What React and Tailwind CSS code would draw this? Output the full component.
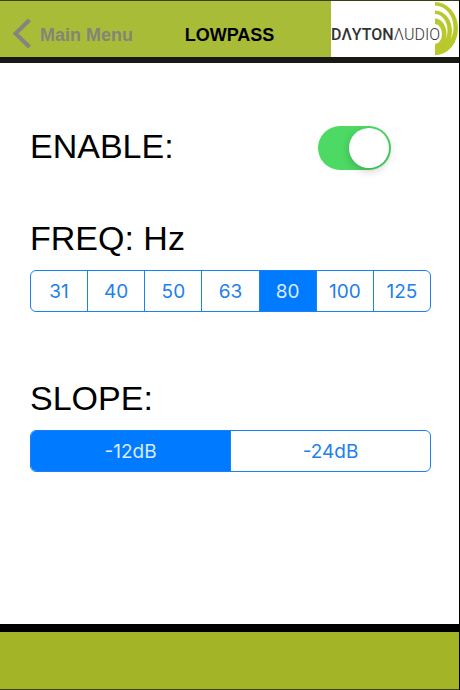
import React, { useState } from 'react';

const FREQUENCIES = ['31', '40', '50', '63', '80', '100', '125'];
const SLOPES = ['-12dB', '-24dB'];

const Logo = () => (
  <div
    role="img"
    aria-label="Dayton Audio"
    className="relative flex h-full w-32 items-center justify-self-end bg-white pt-3"
  >
    {/* Sound waves */}
    <svg className="absolute right-0 top-0 h-14 w-6" viewBox="0 0 24 56" aria-hidden="true">
      <ellipse cx="0" cy="27.5" rx="23" ry="26.5" fill="#b9c92b" />
      <ellipse cx="0" cy="26.5" rx="18.5" ry="22" fill="#fff" />
      <ellipse cx="0" cy="30" rx="17" ry="20.5" fill="#b9c92b" />
      <ellipse cx="0" cy="29.5" rx="12.5" ry="16.5" fill="#fff" />
      <ellipse cx="0" cy="33" rx="11.5" ry="15.5" fill="#b9c92b" />
      <ellipse cx="0" cy="33" rx="7" ry="10" fill="#fff" />
      <path d="M0 43 Q10 44 17 36 L20 41 Q12 54 0 54 Z" fill="#b9c92b" />
    </svg>
    <span className="relative whitespace-nowrap font-['Roboto',sans-serif] text-base leading-5 text-[#333]">
      <span className="font-medium">DΛYTON</span>
      <span className="font-light">ΛUDIO</span>
    </span>
  </div>
);

const SegmentedControl = ({ name, labelledBy, options, value, onChange }) => (
  <div
    role="radiogroup"
    aria-labelledby={labelledBy}
    className="flex h-[42px] overflow-hidden rounded-md border border-[#1a80f5] divide-x divide-[#1a80f5]"
  >
    {options.map((option) => (
      <label key={option} className="relative flex flex-1 cursor-pointer">
        <input
          type="radio"
          name={name}
          value={option}
          checked={value === option}
          onChange={() => onChange(option)}
          className="peer sr-only"
        />
        <span className="flex flex-1 items-center justify-center pt-0.5 font-['Inter',sans-serif] text-[19px] leading-6 text-[#2080ee] peer-checked:bg-[#007aff] peer-checked:text-[#d8ebff]">
          {option}
        </span>
      </label>
    ))}
  </div>
);

const App = () => {
  const [enabled, setEnabled] = useState(true);
  const [freq, setFreq] = useState('80');
  const [slope, setSlope] = useState('-12dB');

  return (
    <div className="flex min-h-screen flex-col border-r border-black bg-white font-['Liberation_Sans',sans-serif] text-black">
      <header className="grid h-[63px] grid-cols-[1fr_auto_1fr] items-center border-t border-b-[6px] border-t-[#3b4212] border-b-[#191a16] bg-[#a9bc37]">
        <a href="#menu" className="flex items-center gap-2 pl-3 pt-3 text-[#848577]">
          <svg className="mb-1 h-8 w-5" viewBox="0 0 20 32" fill="none" aria-hidden="true">
            <path d="M17.5 3 L3.5 16.5 L17.5 30" stroke="#848480" strokeWidth="4" />
          </svg>
          <span className="text-lg leading-6 font-bold">Main Menu</span>
        </a>
        <h1 className="pt-3 text-lg leading-6 font-bold">LOWPASS</h1>
        <Logo />
      </header>

      <main className="flex-1 pt-[63px] pr-7 pl-[30px]">
        <div className="flex h-11 items-start justify-between">
          <label htmlFor="enable" className="text-[34px] leading-10">ENABLE:</label>
          <span className="relative mr-10 h-11 w-[73px]">
            <input
              id="enable"
              type="checkbox"
              role="switch"
              checked={enabled}
              onChange={() => setEnabled(!enabled)}
              className="peer h-11 w-full cursor-pointer appearance-none rounded-full bg-gray-200 checked:bg-[#4cd964]"
            />
            <span className="pointer-events-none absolute left-0.5 top-0.5 size-10 rounded-full bg-white shadow-[0_3px_8px_rgba(0,0,0,0.2)] peer-checked:left-auto peer-checked:right-0.5" />
          </span>
        </div>

        <h2 id="freq-label" className="mt-12 mb-3 text-[34px] leading-10">FREQ: Hz</h2>
        <SegmentedControl
          name="freq"
          labelledBy="freq-label"
          options={FREQUENCIES}
          value={freq}
          onChange={setFreq}
        />

        <h2 id="slope-label" className="mt-[66px] mb-3 text-[34px] leading-10">SLOPE:</h2>
        <SegmentedControl
          name="slope"
          labelledBy="slope-label"
          options={SLOPES}
          value={slope}
          onChange={setSlope}
        />
      </main>

      <footer className="h-[66px] border-t-8 border-b border-t-black border-b-[#3b4212] bg-[#a4b427]" />
    </div>
  );
};

export default App;
